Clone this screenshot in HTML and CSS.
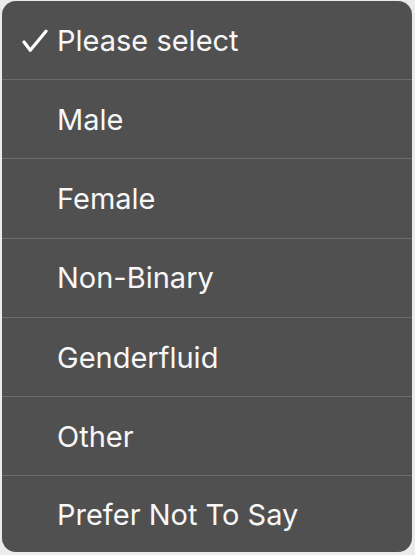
FILE: index.html
```html
<!DOCTYPE html>
<html>
<head>
<meta charset="utf-8">
<link rel="stylesheet" href="styles.css">
</head>
<body>
<div class="menu">
  <div class="row selected">
    <svg class="check" viewBox="0 0 26 24" width="26" height="24"><path d="M2 13 L8.3 21.3 L24 2.2" fill="none" stroke="#fff" stroke-width="3.2" stroke-linecap="round" stroke-linejoin="round"/></svg>
    <span class="label">Please select</span>
  </div>
  <div class="row"><span class="label">Male</span></div>
  <div class="row"><span class="label">Female</span></div>
  <div class="row"><span class="label">Non-Binary</span></div>
  <div class="row"><span class="label">Genderfluid</span></div>
  <div class="row"><span class="label">Other</span></div>
  <div class="row last"><span class="label">Prefer Not To Say</span></div>
</div>
</body>
</html>
```
FILE: styles.css
```css
html, body {
  margin: 0;
  padding: 0;
  background: #ebebeb;
  width: 415px;
  height: 555px;
  overflow: hidden;
}
.menu {
  margin: 1px 0 0 2px;
  width: 410px;
  height: 551px;
  background: #505050;
  border-radius: 14px;
  display: flex;
  flex-direction: column;
  overflow: hidden;
  font-family: Inter, "Noto Sans", sans-serif;
  color: #f7f7f7;
}
.row {
  height: 78.3px;
  flex: none;
  border-bottom: 1px solid #6c6c6c;
  display: flex;
  align-items: center;
  position: relative;
  padding-left: 55px;
  font-size: 29px;
  font-weight: 400;
  letter-spacing: 0;
}
.row.selected { height: 78px; }
.row.last { border-bottom: none; flex: 1; height: auto; }
.check {
  position: absolute;
  left: 20px;
  top: 28px;
}
```
